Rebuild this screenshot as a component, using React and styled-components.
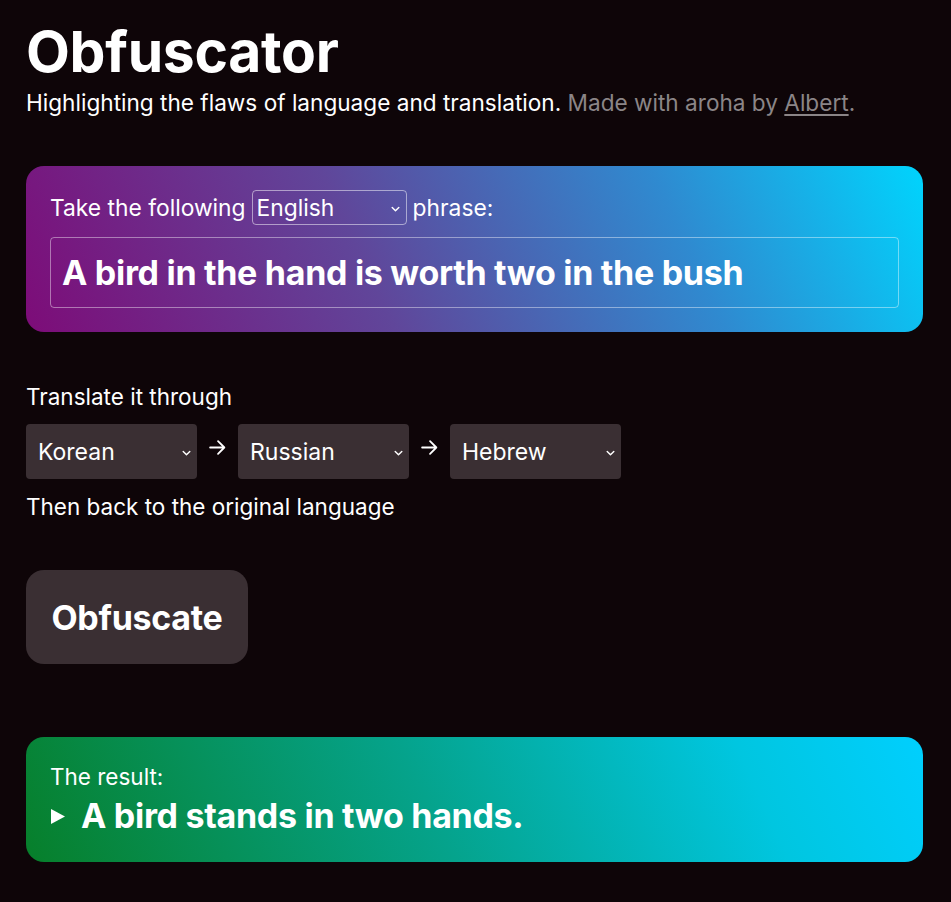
import React from "react";
import styled, { createGlobalStyle } from "styled-components";

const Global = createGlobalStyle`
  html, body { margin: 0; padding: 0; background: #0e0508; }
  body { font-family: Inter, "Noto Sans", sans-serif; color: #fff; }
  * { box-sizing: border-box; }
`;

const Page = styled.main`
  padding: 16px 28px 40px 26px;
  width: 951px;
  min-height: 902px;
  background: #0e0508;
`;

const Layout = styled.div`
  display: flex;
  flex-direction: column;
`;

const Title = styled.h1`
  margin: 0;
  font-size: 57px;
  font-weight: 700;
  line-height: 72px;
  letter-spacing: -0.3px;
`;

const Sub = styled.p`
  margin: 0;
  font-size: 22.6px;
  line-height: 30px;
  color: #fff;
`;

const Muted = styled.span`
  color: #8b8587;
  a { color: #8b8587; text-decoration: underline; text-underline-offset: 3px; }
`;

const Card = styled.section`
  margin-top: ${(p) => p.$mt}px;
  border-radius: 18px;
  padding: ${(p) => p.$pad};
  background: ${(p) => p.$bg};
  display: flex;
  flex-direction: column;
`;

const Line = styled.div`
  display: flex;
  align-items: center;
  gap: 6px;
  font-size: 22.8px;
  line-height: 28px;
`;

const SelectWrap = styled.div`
  position: relative;
  display: inline-flex;
`;

const Select = styled.select`
  appearance: none;
  -webkit-appearance: none;
  font-family: Inter, "Noto Sans", sans-serif;
  color: #fff;
  font-size: ${(p) => p.$fs}px;
  width: ${(p) => p.$w}px;
  height: ${(p) => p.$h}px;
  padding: 0 0 0 ${(p) => p.$pl}px;
  border-radius: ${(p) => p.$r}px;
  background: ${(p) => p.$bg};
  border: ${(p) => p.$border};
  outline: none;
`;

const Chevron = styled.svg`
  position: absolute;
  right: ${(p) => p.$right}px;
  top: 50%;
  transform: translateY(-40%);
  pointer-events: none;
`;

const Phrase = styled.div`
  margin-top: 12px;
  height: 71px;
  border: 1px solid rgba(255, 255, 255, 0.42);
  border-radius: 4px;
  padding: 0 11px;
  display: flex;
  align-items: center;
  font-size: 34px;
  font-weight: 700;
  letter-spacing: -0.3px;
`;

const Label = styled.p`
  margin: ${(p) => p.$m};
  font-size: 22.5px;
  line-height: 28px;
`;

const Chain = styled.div`
  display: flex;
  align-items: center;
  gap: 11px;
  margin-top: 13px;
`;

const Arrow = styled.svg`
  margin-top: -8px;
  flex: none;
`;

const Button = styled.button`
  margin-top: 49px;
  align-self: flex-start;
  height: 94px;
  width: 222px;
  padding: 0;
  border: none;
  border-radius: 18px;
  background: #3a2f33;
  color: #fff;
  font-family: Inter, "Noto Sans", sans-serif;
  font-size: 34px;
  font-weight: 700;
  letter-spacing: -0.3px;
`;

const Result = styled.div`
  display: flex;
  align-items: center;
  gap: 15px;
  margin-top: 5px;
  font-size: 34px;
  font-weight: 700;
  line-height: 40px;
  letter-spacing: -0.3px;
`;

const ChevronIcon = ({ right }) => (
  <Chevron $right={right} width="11" height="11" viewBox="0 0 10 10">
    <path d="M2 3.5 L5 6.5 L8 3.5" fill="none" stroke="#fff" strokeWidth="1.3" strokeLinecap="round" strokeLinejoin="round" />
  </Chevron>
);

const LangSelect = ({ value, options }) => (
  <SelectWrap>
    <Select $fs={23} $w={171} $h={55} $pl={12} $r={4} $bg="#3a2f33" $border="none" defaultValue={value}>
      {options.map((o) => (
        <option key={o}>{o}</option>
      ))}
    </Select>
    <ChevronIcon right={5} />
  </SelectWrap>
);

const ArrowIcon = () => (
  <Arrow width="19" height="19" viewBox="0 0 18 18">
    <path d="M2 9 H15.5 M9.5 3 L15.5 9 L9.5 15" fill="none" stroke="#fff" strokeWidth="1.7" strokeLinecap="round" strokeLinejoin="round" />
  </Arrow>
);

const langs = ["English", "Korean", "Russian", "Hebrew", "French", "German", "Japanese"];

export default function App() {
  return (
    <Page>
      <Global />
      <Layout>
        <Title>Obfuscator</Title>
        <Sub>
          Highlighting the flaws of language and translation.{" "}
          <Muted>
            Made with aroha by <a href="#">Albert</a>.
          </Muted>
        </Sub>

        <Card $mt={48} $pad="24px" $bg="linear-gradient(65deg, #7d0c78 0%, #60469a 38%, #2f8ad0 72%, #00d4fd 100%)">
          <Line>
            <span>Take the following</span>
            <SelectWrap>
              <Select $fs={22.8} $w={155} $h={35} $pl={4} $r={4} $bg="transparent" $border="1px solid rgba(255,255,255,0.5)" defaultValue="English">
                {langs.map((o) => (
                  <option key={o}>{o}</option>
                ))}
              </Select>
              <ChevronIcon right={6} />
            </SelectWrap>
            <span>phrase:</span>
          </Line>
          <Phrase>A bird in the hand is worth two in the bush</Phrase>
        </Card>

        <Label $m="51px 0 0 0">Translate it through</Label>
        <Chain>
          <LangSelect value="Korean" options={langs} />
          <ArrowIcon />
          <LangSelect value="Russian" options={langs} />
          <ArrowIcon />
          <LangSelect value="Hebrew" options={langs} />
        </Chain>
        <Label $m="14px 0 0 0">Then back to the original language</Label>

        <Button>Obfuscate</Button>

        <Card $mt={73} $pad="26px 24px" $bg="linear-gradient(65deg, #077f2a 0%, #05a38c 45%, #00c6e0 80%, #00cffe 100%)">
          <Label $m="0">The result:</Label>
          <Result>
            <svg width="16" height="17" viewBox="0 0 16 17">
              <path d="M1 1 L15 8.5 L1 16 Z" fill="#fff" />
            </svg>
            <span>A bird stands in two hands.</span>
          </Result>
        </Card>
      </Layout>
    </Page>
  );
}
